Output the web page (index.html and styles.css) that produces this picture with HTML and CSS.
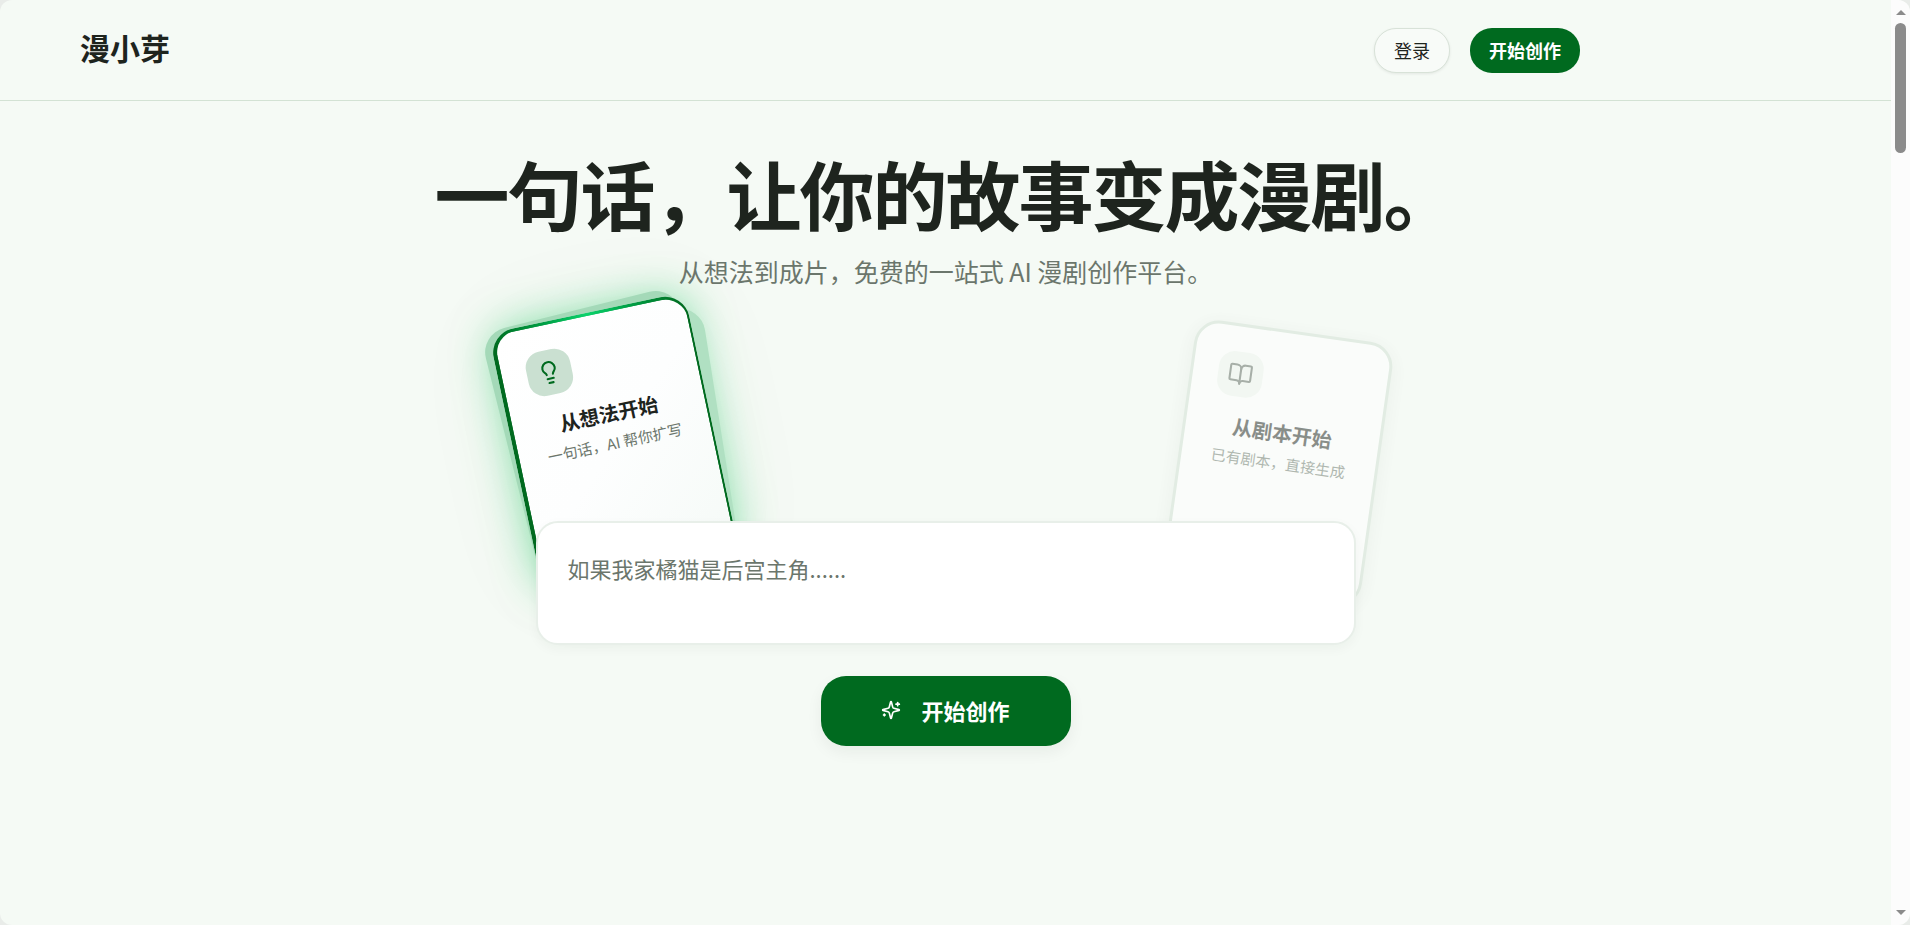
FILE: index.html
```
<!DOCTYPE html>
<html lang="zh-CN">
  <head>
    <meta charset="utf-8" />
    <meta name="viewport" content="width=device-width, initial-scale=1.0" />
    <title>漫小芽</title>
    <link rel="stylesheet" href="styles.css">
  </head>

  <body>
    <div class="window">
      <div class="page">
        <header class="site-header">
          <div class="header-inner">
            <a class="brand" href="#">漫小芽</a>
            <nav class="header-actions">
              <button class="btn-login" type="button">登录</button>
              <button class="btn-start" type="button">开始创作</button>
            </nav>
          </div>
        </header>

        <main class="hero">
          <h1>一句话，让你的故事变成漫剧。</h1>
          <p class="tagline">从想法到成片，免费的一站式 AI 漫剧创作平台。</p>

          <div class="cards">
            <div class="card-slot slot-idea">
              <div class="card-layer layer-glow"></div>
              <div class="card-layer layer-right"></div>
              <div class="card-layer layer-left"></div>
              <button class="card card-active" type="button">
                <span class="card-icon">
                  <svg viewBox="0 0 24 24" aria-hidden="true">
                    <path d="M15 14c.2-1 .7-1.7 1.5-2.5 1-.9 1.5-2.2 1.5-3.5A6 6 0 0 0 6 8c0 1 .2 2.2 1.5 3.5.7.7 1.3 1.5 1.5 2.5" />
                    <path d="M9 18h6" />
                    <path d="M10 22h4" />
                  </svg>
                </span>
                <span class="card-title">从想法开始</span>
                <span class="card-text">一句话，AI 帮你扩写</span>
              </button>
            </div>

            <div class="card-slot slot-script">
              <button class="card" type="button">
                <span class="card-icon">
                  <svg viewBox="0 0 24 24" aria-hidden="true">
                    <path d="M12 7v14" />
                    <path d="M3 18a1 1 0 0 1-1-1V4a1 1 0 0 1 1-1h5a4 4 0 0 1 4 4 4 4 0 0 1 4-4h5a1 1 0 0 1 1 1v13a1 1 0 0 1-1 1h-6a3 3 0 0 0-3 3 3 3 0 0 0-3-3z" />
                  </svg>
                </span>
                <span class="card-title">从剧本开始</span>
                <span class="card-text">已有剧本，直接生成</span>
              </button>
            </div>
          </div>

          <form class="prompt-form">
            <textarea class="prompt" aria-label="故事想法" placeholder="如果我家橘猫是后宫主角......"></textarea>
            <button class="btn-create" type="button">
              <svg viewBox="0 0 24 24" aria-hidden="true">
                <path d="M9.937 15.5A2 2 0 0 0 8.5 14.063l-6.135-1.582a.5.5 0 0 1 0-.962L8.5 9.936A2 2 0 0 0 9.937 8.5l1.582-6.135a.5.5 0 0 1 .963 0L14.063 8.5A2 2 0 0 0 15.5 9.937l6.135 1.581a.5.5 0 0 1 0 .964L15.5 14.063a2 2 0 0 0-1.437 1.437l-1.582 6.135a.5.5 0 0 1-.963 0z" />
                <path d="M20 3v4" />
                <path d="M22 5h-4" />
                <path d="M4 17v2" />
                <path d="M5 18H3" />
              </svg>
              <span>开始创作</span>
            </button>
          </form>
        </main>
      </div>

      <div class="scrollbar" aria-hidden="true">
        <span class="arrow arrow-up"></span>
        <span class="thumb"></span>
        <span class="arrow arrow-down"></span>
      </div>
    </div>
  </body>
</html>
```
FILE: styles.css
```
* {
  box-sizing: border-box;
}

body {
  margin: 0;
  background-color: #e9ece9;
  color: #1e241e;
  font-family: "Noto Sans CJK SC", sans-serif;
}

button,
textarea {
  font-family: inherit;
  color: inherit;
}

button {
  cursor: pointer;
}

svg {
  fill: none;
  stroke: currentColor;
  stroke-width: 2;
  stroke-linecap: round;
  stroke-linejoin: round;
}

.window {
  display: flex;
  height: 100vh;
  overflow: hidden;
  border-radius: 12px;
  background-color: #f5faf5;
}

.page {
  flex: 1;
  min-width: 0;
  overflow: hidden;
}

/* header */
.site-header {
  padding: 0 80px;
  border-bottom: 1px solid #d3e2d4;
}

.header-inner {
  display: flex;
  align-items: center;
  justify-content: space-between;
  max-width: 1500px;
  height: 100px;
}

.brand {
  padding-bottom: 6px;
  font-size: 30px;
  line-height: 40px;
  font-weight: 700;
  color: inherit;
  text-decoration: none;
}

.header-actions {
  display: flex;
  gap: 20px;
}

.btn-login,
.btn-start {
  height: 45px;
  padding: 0 19px;
  border: 0;
  border-radius: 22px;
  font-size: 18px;
  line-height: 24px;
}

.btn-login {
  border: 1px solid #d8e2d8;
  background-color: #f8fbf8;
  font-weight: 400;
  box-shadow: 0 1px 3px rgba(0, 0, 0, 0.08);
}

.btn-start {
  background-color: #006a1f;
  color: #fff;
  font-weight: 700;
}

/* hero */
.hero {
  display: flex;
  flex-direction: column;
  align-items: center;
  padding: 47px 20px;
}

h1 {
  margin: 0;
  font-size: 75px;
  line-height: 90px;
  font-weight: 700;
  letter-spacing: -2px;
}

.tagline {
  margin: 13px 0 39px;
  font-size: 25px;
  line-height: 40px;
  color: #6b766c;
  position: relative;
  z-index: 1;
}

/* cards */
.cards {
  display: flex;
  justify-content: space-between;
  width: 100%;
  max-width: 864px;
}

.card-slot {
  position: relative;
  width: 200px;
  height: 266px;
}

.slot-idea {
  transform: translateY(-20px) rotate(-12deg);
}

.slot-script {
  transform: rotate(8deg);
  opacity: 0.5;
}

.card {
  position: relative;
  display: flex;
  flex-direction: column;
  align-items: center;
  width: 100%;
  height: 100%;
  padding: 25px;
  border: 3px solid #d0e0d2;
  border-radius: 25px;
  background: #fff;
  box-shadow: 0 4px 16px rgba(0, 40, 10, 0.08);
}

.card-active {
  border-width: 3px 2px 3px 4px;
  border-color: transparent;
  background:
    linear-gradient(135deg, #fff 0%, #fdfefe 50%, #f5faf7 100%) padding-box,
    radial-gradient(circle at 50% 0, #0bd36c 0, #00a348 40px, #006a1f 100px) border-box;
  box-shadow: none;
}

.card-layer {
  position: absolute;
  inset: 0;
  border-radius: 25px;
}

.layer-glow {
  box-shadow:
    0 0 40px rgba(20, 200, 90, 0.5),
    0 0 90px rgba(20, 130, 50, 0.07);
}

.layer-left {
  background-color: #a4d9b8;
  transform: translate(-4px, -5px) rotate(-2deg);
}

.layer-right {
  background-color: #b0e0c2;
  transform: translate(7px, 11px) rotate(3deg);
}

.card-icon {
  display: flex;
  align-items: center;
  justify-content: center;
  align-self: flex-start;
  width: 45px;
  height: 45px;
  margin-bottom: 17px;
  border-radius: 16px;
  background-color: #f1f6f1;
  color: #5c665d;
}

.card-icon svg {
  width: 25px;
  height: 25px;
}

.card-active .card-icon {
  background-color: #cae0d1;
  color: #006a1f;
}

.card-title {
  font-size: 20px;
  line-height: 26px;
  font-weight: 700;
  white-space: nowrap;
}

.card-text {
  margin-top: 6px;
  font-size: 15px;
  line-height: 22px;
  color: #6b766c;
  white-space: nowrap;
}

/* prompt */
.prompt-form {
  position: relative;
  display: flex;
  flex-direction: column;
  align-items: center;
  gap: 31px;
  width: 100%;
  max-width: 820px;
  margin-top: -75px;
}

.prompt {
  display: block;
  width: 100%;
  height: 124px;
  padding: 27px 30px;
  border: 2px solid #e8efe9;
  border-radius: 22px;
  background-color: #fff;
  box-shadow: 0 4px 12px rgba(0, 40, 10, 0.04);
  font-size: 22px;
  line-height: 36px;
  resize: none;
}

.prompt::placeholder {
  color: #6b766c;
}

.btn-create {
  display: flex;
  align-items: center;
  justify-content: center;
  gap: 20px;
  width: 250px;
  height: 70px;
  padding: 0 0 3px;
  border: 0;
  border-radius: 25px;
  background-color: #006a1f;
  color: #fff;
  box-shadow: 0 6px 16px rgba(0, 40, 10, 0.06);
  font-size: 22px;
  line-height: 36px;
  font-weight: 700;
}

.btn-create svg {
  width: 20px;
  height: 20px;
}

/* scrollbar */
.scrollbar {
  display: flex;
  flex-direction: column;
  align-items: center;
  width: 19px;
  padding: 10px 0;
  background-color: #fcfcfc;
}

.thumb {
  width: 11px;
  height: 130px;
  margin-top: 8px;
  border-radius: 6px;
  background-color: #8b8b8b;
}

.arrow {
  border: 5px solid transparent;
}

.arrow-up {
  border-top: 0;
  border-bottom-color: #8b8b8b;
}

.arrow-down {
  margin-top: auto;
  border-bottom: 0;
  border-top-color: #8b8b8b;
}
```
